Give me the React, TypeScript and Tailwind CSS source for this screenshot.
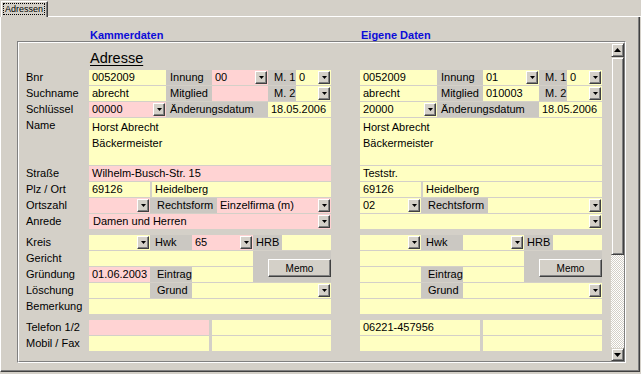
import React from 'react';

type Tone = 'y' | 'p';

interface ColData {
    heading?: boolean;
    bnr: string; innung: string; innungT: Tone; m1: string;
    such: string; mitglied: string; mitgliedT: Tone; m2: string;
    schl: string; schlT: Tone; datum: string;
    name: string[];
    strasse: string; strasseT: Tone;
    plz: string; ort: string;
    ortszahl: string; ortszahlT: Tone; rechtsform: string; rechtsformT: Tone;
    anrede: string; anredeT: Tone;
    hwk: string; hwkT: Tone;
    gruendung: string; gruendungT: Tone;
    tel1: string; tel1T: Tone;
}

const kammer: ColData = {
    heading: true,
    bnr: '0052009', innung: '00', innungT: 'p', m1: '0',
    such: 'abrecht', mitglied: '', mitgliedT: 'p', m2: '',
    schl: '00000', schlT: 'p', datum: '18.05.2006',
    name: ['Horst Abrecht', 'Bäckermeister'],
    strasse: 'Wilhelm-Busch-Str. 15', strasseT: 'p',
    plz: '69126', ort: 'Heidelberg',
    ortszahl: '', ortszahlT: 'p', rechtsform: 'Einzelfirma (m)', rechtsformT: 'p',
    anrede: 'Damen und Herren', anredeT: 'p',
    hwk: '65', hwkT: 'p',
    gruendung: '01.06.2003', gruendungT: 'p',
    tel1: '', tel1T: 'p',
};

const eigene: ColData = {
    bnr: '0052009', innung: '01', innungT: 'y', m1: '0',
    such: 'abrecht', mitglied: '010003', mitgliedT: 'y', m2: '',
    schl: '20000', schlT: 'y', datum: '18.05.2006',
    name: ['Horst Abrecht', 'Bäckermeister'],
    strasse: 'Teststr.', strasseT: 'y',
    plz: '69126', ort: 'Heidelberg',
    ortszahl: '02', ortszahlT: 'y', rechtsform: '', rechtsformT: 'y',
    anrede: '', anredeT: 'y',
    hwk: '', hwkT: 'y',
    gruendung: '', gruendungT: 'y',
    tel1: '06221-457956', tel1T: 'y',
};

const toneBg = (t: Tone) => (t === 'p' ? 'bg-[#ffd3d3]' : 'bg-[#ffffc2]');

function Tri({ up }: { up?: boolean }) {
    return (
        <svg width="7" height="4" viewBox="0 0 7 4">
            <path d={up ? 'M3.5 0L7 4H0z' : 'M0 0h7L3.5 4z'} fill="#000" />
        </svg>
    );
}

function DropBtn() {
    return (
        <div className="absolute right-[1px] top-[1px] flex h-[13px] w-[12px] items-center justify-center border-t border-l border-t-white border-l-white border-r border-b border-r-[#404040] border-b-[#404040] bg-[#d4d0c8] shadow-[inset_-1px_-1px_0_#808080]">
            <svg width="5" height="3" viewBox="0 0 5 3">
                <path d="M0 0h5L2.5 3z" fill="#000" />
            </svg>
        </div>
    );
}

function Box({ w, t, v, drop, pl = 'pl-[3px]' }: { w: string; t: Tone; v?: string; drop?: boolean; pl?: string }) {
    return (
        <div className={`relative h-[15px] shrink-0 overflow-hidden whitespace-nowrap leading-[14px] ${w} ${pl} ${toneBg(t)}`}>
            {v}
            {drop && <DropBtn />}
        </div>
    );
}

function Lab({ w, t, pl = 'pl-[4px]' }: { w: string; t: string; pl?: string }) {
    return (
        <div className={`h-[15px] shrink-0 whitespace-nowrap bg-[#cbc8c2] leading-[14px] ${w} ${pl}`}>{t}</div>
    );
}

function DataCol({ d }: { d: ColData }) {
    return (
        <div className="flex w-[242px] shrink-0 flex-col">
            <div className="h-[27px] pt-[7px] pl-[1px]">
                {d.heading && <span className="text-[14.5px] leading-[16px] underline underline-offset-[2px]">Adresse</span>}
            </div>
            <div className="flex flex-col gap-[1px]">
                <div className="flex">
                    <Box w="w-[77px]" t="y" v={d.bnr} />
                    <Lab w="w-[46px]" t="Innung" />
                    <Box w="w-[56px]" t={d.innungT} v={d.innung} drop />
                    <Lab w="w-[28px]" t="M. 1" pl="pl-[6px]" />
                    <Box w="w-[35px]" t="y" v={d.m1} drop />
                </div>
                <div className="flex">
                    <Box w="w-[77px]" t="y" v={d.such} />
                    <Lab w="w-[46px]" t="Mitglied" />
                    <Box w="w-[56px]" t={d.mitgliedT} v={d.mitglied} />
                    <Lab w="w-[28px]" t="M. 2" pl="pl-[6px]" />
                    <Box w="w-[35px]" t="y" v={d.m2} drop />
                </div>
                <div className="flex">
                    <Box w="w-[77px]" t={d.schlT} v={d.schl} drop />
                    <Lab w="w-[102px]" t="Änderungsdatum" />
                    <Box w="w-[63px]" t="y" v={d.datum} />
                </div>
                <div className="h-[47px] bg-[#ffffc2] pt-[1px] pl-[3px] leading-[16px]">
                    {d.name.map((l) => (
                        <div key={l}>{l}</div>
                    ))}
                </div>
                <Box w="w-full" t={d.strasseT} v={d.strasse} />
                <div className="flex">
                    <Box w="w-[61px]" t="y" v={d.plz} />
                    <div className="w-[2px] shrink-0" />
                    <Box w="w-[179px]" t="y" v={d.ort} />
                </div>
                <div className="flex">
                    <Box w="w-[61px]" t={d.ortszahlT} v={d.ortszahl} drop />
                    <Lab w="w-[67px]" t="Rechtsform" pl="pl-[7px]" />
                    <Box w="w-[114px]" t={d.rechtsformT} v={d.rechtsform} drop />
                </div>
                <Box w="w-full" t={d.anredeT} v={d.anrede} drop pl="pl-[4px]" />
            </div>

            <div className="mt-[6px] flex flex-col gap-[1px]">
                <div className="flex">
                    <Box w="w-[61px]" t="y" drop />
                    <Lab w="w-[42px]" t="Hwk" pl="pl-[5px]" />
                    <Box w="w-[61px]" t={d.hwkT} v={d.hwk} drop />
                    <Lab w="w-[29px]" t="HRB" pl="pl-[3px]" />
                    <Box w="w-[49px]" t="y" />
                </div>
                <div className="flex h-[31px]">
                    <div className="flex w-[164px] shrink-0 flex-col gap-[1px]">
                        <Box w="w-full" t="y" />
                        <div className="flex">
                            <Box w="w-[61px]" t={d.gruendungT} v={d.gruendung} />
                            <Lab w="w-[42px]" t="Eintrag" pl="pl-[7px]" />
                            <Box w="w-[61px]" t="y" />
                        </div>
                    </div>
                    <div className="w-[78px] bg-[#cbc8c2] pt-[8px] pl-[15px]">
                        <div className="flex h-[18px] w-[63px] items-center justify-center border-t border-l border-t-white border-l-white border-r border-b border-r-[#404040] border-b-[#404040] bg-[#d4d0c8] text-[10px] shadow-[inset_-1px_-1px_0_#808080]">
                            Memo
                        </div>
                    </div>
                </div>
                <div className="flex">
                    <Box w="w-[61px]" t="y" />
                    <Lab w="w-[42px]" t="Grund" pl="pl-[7px]" />
                    <Box w="w-[139px]" t="y" drop />
                </div>
                <Box w="w-full" t="y" />
            </div>

            <div className="mt-[6px] flex flex-col gap-[1px]">
                <div className="flex">
                    <Box w="w-[120px]" t={d.tel1T} v={d.tel1} />
                    <div className="w-[3px] shrink-0" />
                    <Box w="w-[119px]" t="y" />
                </div>
                <div className="flex">
                    <Box w="w-[120px]" t="y" />
                    <div className="w-[3px] shrink-0" />
                    <Box w="w-[119px]" t="y" />
                </div>
            </div>
        </div>
    );
}

function LabelCol() {
    const L = ({ t, h = 'h-[15px]' }: { t: string; h?: string }) => <div className={`${h} leading-[14px]`}>{t}</div>;
    return (
        <div className="flex w-[70px] shrink-0 flex-col pl-[7px]">
            <div className="h-[27px]" />
            <div className="flex flex-col gap-[1px]">
                <L t="Bnr" />
                <L t="Suchname" />
                <L t="Schlüssel" />
                <L t="Name" h="h-[47px]" />
                <L t="Straße" />
                <L t="Plz / Ort" />
                <L t="Ortszahl" />
                <L t="Anrede" />
            </div>
            <div className="mt-[6px] flex flex-col gap-[1px]">
                <L t="Kreis" />
                <L t="Gericht" />
                <L t="Gründung" />
                <L t="Löschung" />
                <L t="Bemerkung" />
            </div>
            <div className="mt-[6px] flex flex-col gap-[1px]">
                <L t="Telefon 1/2" />
                <L t="Mobil / Fax" />
            </div>
        </div>
    );
}

function ScrollBar() {
    const btn = 'flex items-center justify-center border-t border-l border-t-[#d4d0c8] border-l-[#d4d0c8] border-r border-b border-r-[#404040] border-b-[#404040] bg-[#d4d0c8] shadow-[inset_1px_1px_0_#fff,inset_-1px_-1px_0_#808080]';
    return (
        <div className="flex w-[13px] shrink-0 flex-col">
            <div className={`h-[14px] ${btn}`}>
                <Tri up />
            </div>
            <div className={`h-[198px] ${btn}`} />
            <div className="flex-1 bg-[repeating-conic-gradient(#ffffff_0_25%,#d4d0c8_0_50%)] bg-[length:2px_2px]" />
            <div className={`h-[13px] ${btn}`}>
                <Tri />
            </div>
        </div>
    );
}

export default function App() {
    return (
        <div className="flex h-[374px] w-[641px] flex-col overflow-hidden bg-[#d4d0c8] font-['Liberation_Sans',Arial,sans-serif] text-[11px] text-black">
            {/* Tab strip */}
            <div className="flex h-[17px] shrink-0">
                <div className="ml-[1px] mt-[1px] h-[16px] w-[47px] shrink-0 border-t border-l border-t-white border-l-white border-r border-r-[#404040] pt-[1px] pl-[1px] shadow-[inset_-1px_0_0_#808080]">
                    <div className="h-[12px] w-[42px] border border-dotted border-black text-center text-[9px] leading-[10px]">
                        Adressen
                    </div>
                </div>
                <div className="flex-1 border-b border-b-white" />
            </div>

            {/* Tab page */}
            <div className="flex h-[355px] w-[640px] shrink-0 flex-col border-l border-l-white border-r border-r-[#404040] border-b border-b-[#404040] shadow-[inset_-1px_-1px_0_#808080]">
                <div className="flex h-[24px] shrink-0 pt-[12px] pl-[89px] text-[11px] font-bold leading-[12px] text-[#0c0cd8]">
                    <div className="w-[271px]">Kammerdaten</div>
                    <div>Eigene Daten</div>
                </div>
                <div className="ml-[16px] flex h-[322px] w-[609px] border-t border-l border-t-[#808080] border-l-[#808080] border-r border-b border-r-white border-b-white">
                    <div className="flex flex-1 border-t border-l border-t-white border-l-white border-r border-b border-r-[#808080] border-b-[#808080]">
                        <LabelCol />
                        <DataCol d={kammer} />
                        <div className="w-[29px] shrink-0" />
                        <DataCol d={eigene} />
                        <div className="flex-1" />
                        <ScrollBar />
                    </div>
                </div>
            </div>
        </div>
    );
}
